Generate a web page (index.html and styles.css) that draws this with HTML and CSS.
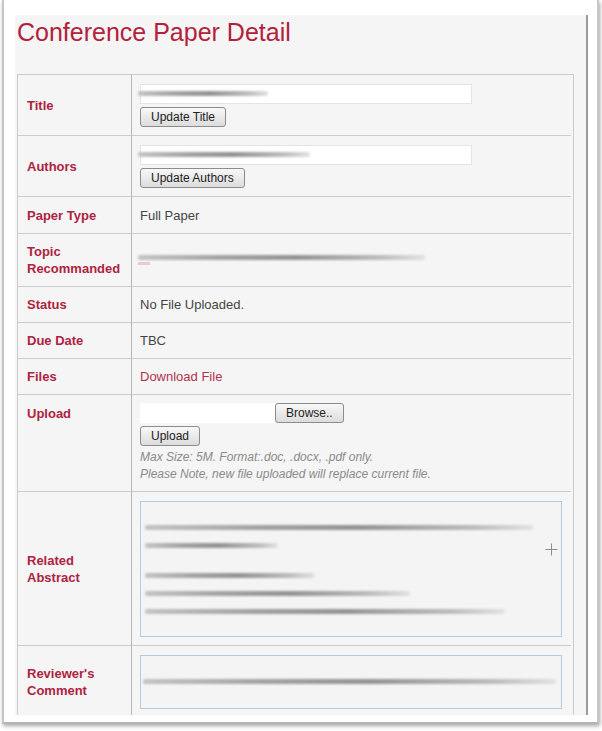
FILE: index.html
```html
<!DOCTYPE html>
<html>
<head>
<meta charset="utf-8">
<link rel="stylesheet" href="styles.css">
</head>
<body>
<div class="frame">
  <div class="panel">
    <h1 class="page-title">Conference Paper Detail</h1>
    <div class="detail">
      <div class="lbl">Title</div>
      <div class="val">
        <div class="stack">
          <div class="field wide"><span class="blur" style="width:130px"></span></div>
          <button class="btn">Update Title</button>
        </div>
      </div>

      <div class="lbl">Authors</div>
      <div class="val">
        <div class="stack">
          <div class="field wide"><span class="blur" style="width:172px"></span></div>
          <button class="btn">Update Authors</button>
        </div>
      </div>

      <div class="lbl">Paper Type</div>
      <div class="val">Full Paper</div>

      <div class="lbl">Topic<br>Recommanded</div>
      <div class="val">
        <div class="topic">
          <span class="blur" style="width:287px"></span>
          <span class="pink"></span>
        </div>
      </div>

      <div class="lbl">Status</div>
      <div class="val">No File Uploaded.</div>

      <div class="lbl">Due Date</div>
      <div class="val">TBC</div>

      <div class="lbl">Files</div>
      <div class="val"><a class="link" href="#">Download File</a></div>

      <div class="lbl top">Upload</div>
      <div class="val">
        <div class="stack">
          <div class="file-row">
            <div class="field file"></div>
            <button class="btn">Browse..</button>
          </div>
          <button class="btn">Upload</button>
          <div class="note">Max Size: 5M. Format:.doc, .docx, .pdf only.<br>Please Note, new file uploaded will replace current file.</div>
        </div>
      </div>

      <div class="lbl">Related<br>Abstract</div>
      <div class="val">
        <div class="box abstract">
          <span class="blur" style="width:388px"></span>
          <span class="blur" style="width:133px"></span>
          <span class="blur gapped" style="width:170px"></span>
          <span class="blur" style="width:265px"></span>
          <span class="blur" style="width:360px"></span>
          <svg class="plus" width="13" height="13" viewBox="0 0 13 13"><path d="M6.5 0.5V12.5M0.5 6.5H12.5" stroke="#8c8c8c" stroke-width="1" fill="none"/></svg>
        </div>
      </div>

      <div class="lbl">Reviewer's<br>Comment</div>
      <div class="val">
        <div class="box comment">
          <span class="blur" style="width:413px"></span>
        </div>
      </div>
    </div>
  </div>
</div>
</body>
</html>
```
FILE: styles.css
```css
html, body {
  margin: 0;
  padding: 0;
  background: #ffffff;
}

body {
  font-family: "Liberation Sans", Arial, sans-serif;
  width: 602px;
  height: 731px;
  overflow: hidden;
}

.frame {
  margin-left: 2px;
  width: 597px;
  height: 724px;
  box-sizing: border-box;
  padding: 15px 9px 7px 11px;
  border-left: 2px solid #c6c6c6;
  border-right: 2px solid #c6c6c6;
  border-bottom: 2px solid #b4b4b4;
  box-shadow: 1px 2px 4px rgba(0, 0, 0, 0.35);
  background: #ffffff;
}

.panel {
  width: 573px;
  height: 700px;
  box-sizing: border-box;
  background: #f5f5f5;
  border-right: 2px solid #9c9c9c;
  padding: 2px 0 0 2px;
  overflow: hidden;
}

.page-title {
  margin: 0;
  font-size: 25px;
  line-height: 30px;
  font-weight: normal;
  color: #b3213c;
}

.detail {
  margin-top: 27px;
  width: 555px;
  display: grid;
  grid-template-columns: 114px 439px;
  grid-template-rows: 61px 61px 37px 53px 36px 36px 36px 97px 154px 72px;
  border-top: 1px solid #cbcbcb;
  border-left: 1px solid #cbcbcb;
  border-right: 1px solid #cbcbcb;
}

.lbl, .val {
  box-sizing: border-box;
  border-bottom: 1px solid #cbcbcb;
  display: flex;
  align-items: center;
}

.lbl {
  border-right: 1px solid #b6b6b6;
  padding-left: 9px;
  font-size: 13px;
  line-height: 17px;
  font-weight: bold;
  color: #ae2340;
}

.lbl.top {
  align-items: flex-start;
  padding-top: 10px;
}

.val {
  padding: 0 9px 0 8px;
  font-size: 13px;
  line-height: 17px;
  color: #444444;
}

.stack {
  display: flex;
  flex-direction: column;
  align-items: flex-start;
  gap: 3px;
}

.field {
  box-sizing: border-box;
  height: 20px;
  background: #ffffff;
  border: 1px solid #e4e4e4;
  display: flex;
  align-items: center;
}

.field.wide {
  width: 332px;
}

.field .blur {
  margin-left: -3px;
}

.field.file {
  width: 135px;
  border-color: #ffffff;
}

.file-row {
  display: flex;
}

.btn {
  box-sizing: border-box;
  height: 20px;
  padding: 0 10px;
  font-family: "Liberation Sans", Arial, sans-serif;
  font-size: 12px;
  color: #222222;
  background: linear-gradient(#f8f8f8, #dcdcdc);
  border: 1px solid #8c8c8c;
  border-radius: 3px;
}

.blur {
  display: block;
  height: 5px;
  background: linear-gradient(to right, #c4c4c4, #a2a2a2 30%, #949494 55%, #bdbdbd 85%, #e2e2e2);
  filter: blur(1px);
  border-radius: 2px;
}

.topic {
  display: flex;
  flex-direction: column;
  gap: 2px;
  margin-left: -2px;
}

.pink {
  display: block;
  width: 12px;
  height: 3px;
  background: #f0c6cf;
  filter: blur(0.6px);
}

.link {
  color: #b2334f;
  text-decoration: none;
}

.note {
  font-size: 12px;
  line-height: 17px;
  font-style: italic;
  color: #8a8a8a;
}

.box {
  box-sizing: border-box;
  width: 422px;
  border: 1px solid #b4cce0;
  background: #f4f4f4;
  position: relative;
}

.abstract {
  height: 136px;
  padding: 23px 0 0 4px;
  display: flex;
  flex-direction: column;
  gap: 13px;
}

.abstract .gapped {
  margin-top: 12px;
}

.plus {
  position: absolute;
  right: 3px;
  top: 41px;
}

.comment {
  height: 54px;
  padding: 0 4px 0 2px;
  display: flex;
  align-items: center;
}
```
